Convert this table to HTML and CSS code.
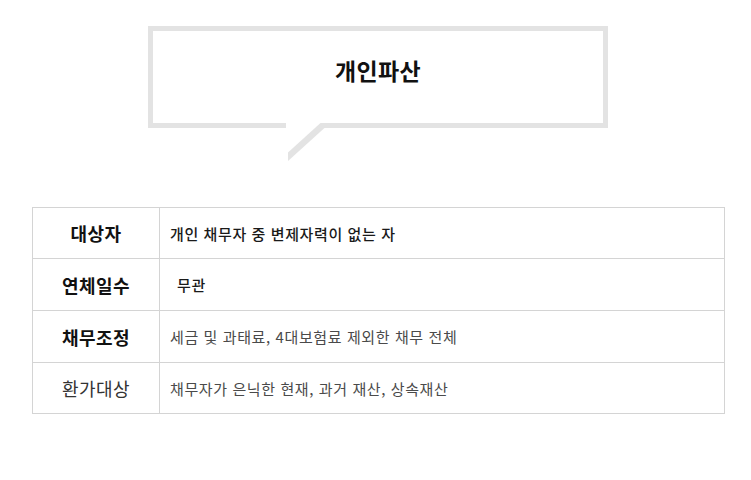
FILE: index.html
```html
<!DOCTYPE html>
<html lang="ko">
<head>
<meta charset="utf-8">
<title>개인파산</title>
<link rel="stylesheet" href="styles.css">
</head>
<body>
<div class="bubble">
  <h1 class="title">개인파산</h1>
  <svg class="tail" width="46" height="40" viewBox="0 0 46 40">
    <rect x="2" y="0" width="35" height="6" fill="#ffffff"/>
    <polygon points="36.5,1 4,30.5 4,39 41,5.5 41,1" fill="#e3e3e3"/>
  </svg>
</div>
<table class="info">
  <tr>
    <th class="head strong">대상자</th>
    <td class="body dark">개인 채무자 중 변제자력이 없는 자</td>
  </tr>
  <tr>
    <th class="head strong">연체일수</th>
    <td class="body dark indent">무관</td>
  </tr>
  <tr>
    <th class="head strong">채무조정</th>
    <td class="body light">세금 및 과태료, 4대보험료 제외한 채무 전체</td>
  </tr>
  <tr>
    <th class="head plain">환가대상</th>
    <td class="body light">채무자가 은닉한 현재, 과거 재산, 상속재산</td>
  </tr>
</table>
</body>
</html>
```
FILE: styles.css
```css
html, body {
  margin: 0;
  padding: 0;
  background: #ffffff;
}
body {
  font-family: "Noto Sans CJK KR", "Noto Sans", sans-serif;
  color: #111;
  width: 751px;
}
.bubble {
  position: relative;
  box-sizing: border-box;
  width: 460px;
  height: 102px;
  margin: 26px 0 0 148px;
  border: 5px solid #e3e3e3;
  padding-top: 24px;
}
.title {
  margin: 0;
  font-size: 23px;
  line-height: 30px;
  font-weight: 700;
  text-align: center;
  color: #111;
  letter-spacing: 0.3px;
}
.tail {
  position: absolute;
  left: 131px;
  top: 91px;
  display: block;
}
.info {
  border-collapse: collapse;
  width: 693px;
  margin: 79px 0 0 32px;
  table-layout: fixed;
}
.info th, .info td {
  border: 1px solid #d4d4d4;
  padding: 0;
}
.info tr:nth-child(1) th, .info tr:nth-child(4) th { height: 50px; }
.info tr:nth-child(2) th, .info tr:nth-child(3) th { height: 51px; }
.head {
  width: 126px;
  font-size: 18px;
  letter-spacing: 0.5px;
  text-align: center;
  vertical-align: middle;
}
.strong { font-weight: 700; color: #111; }
.plain { font-weight: 400; color: #333; }
.body {
  font-size: 15px;
  letter-spacing: 0.6px;
  text-align: left;
  padding-left: 10px !important;
  vertical-align: middle;
}
.dark { color: #1a1a1a; font-weight: 500; }
.light { color: #4a4a4a; }
.indent { padding-left: 17px !important; }
```
